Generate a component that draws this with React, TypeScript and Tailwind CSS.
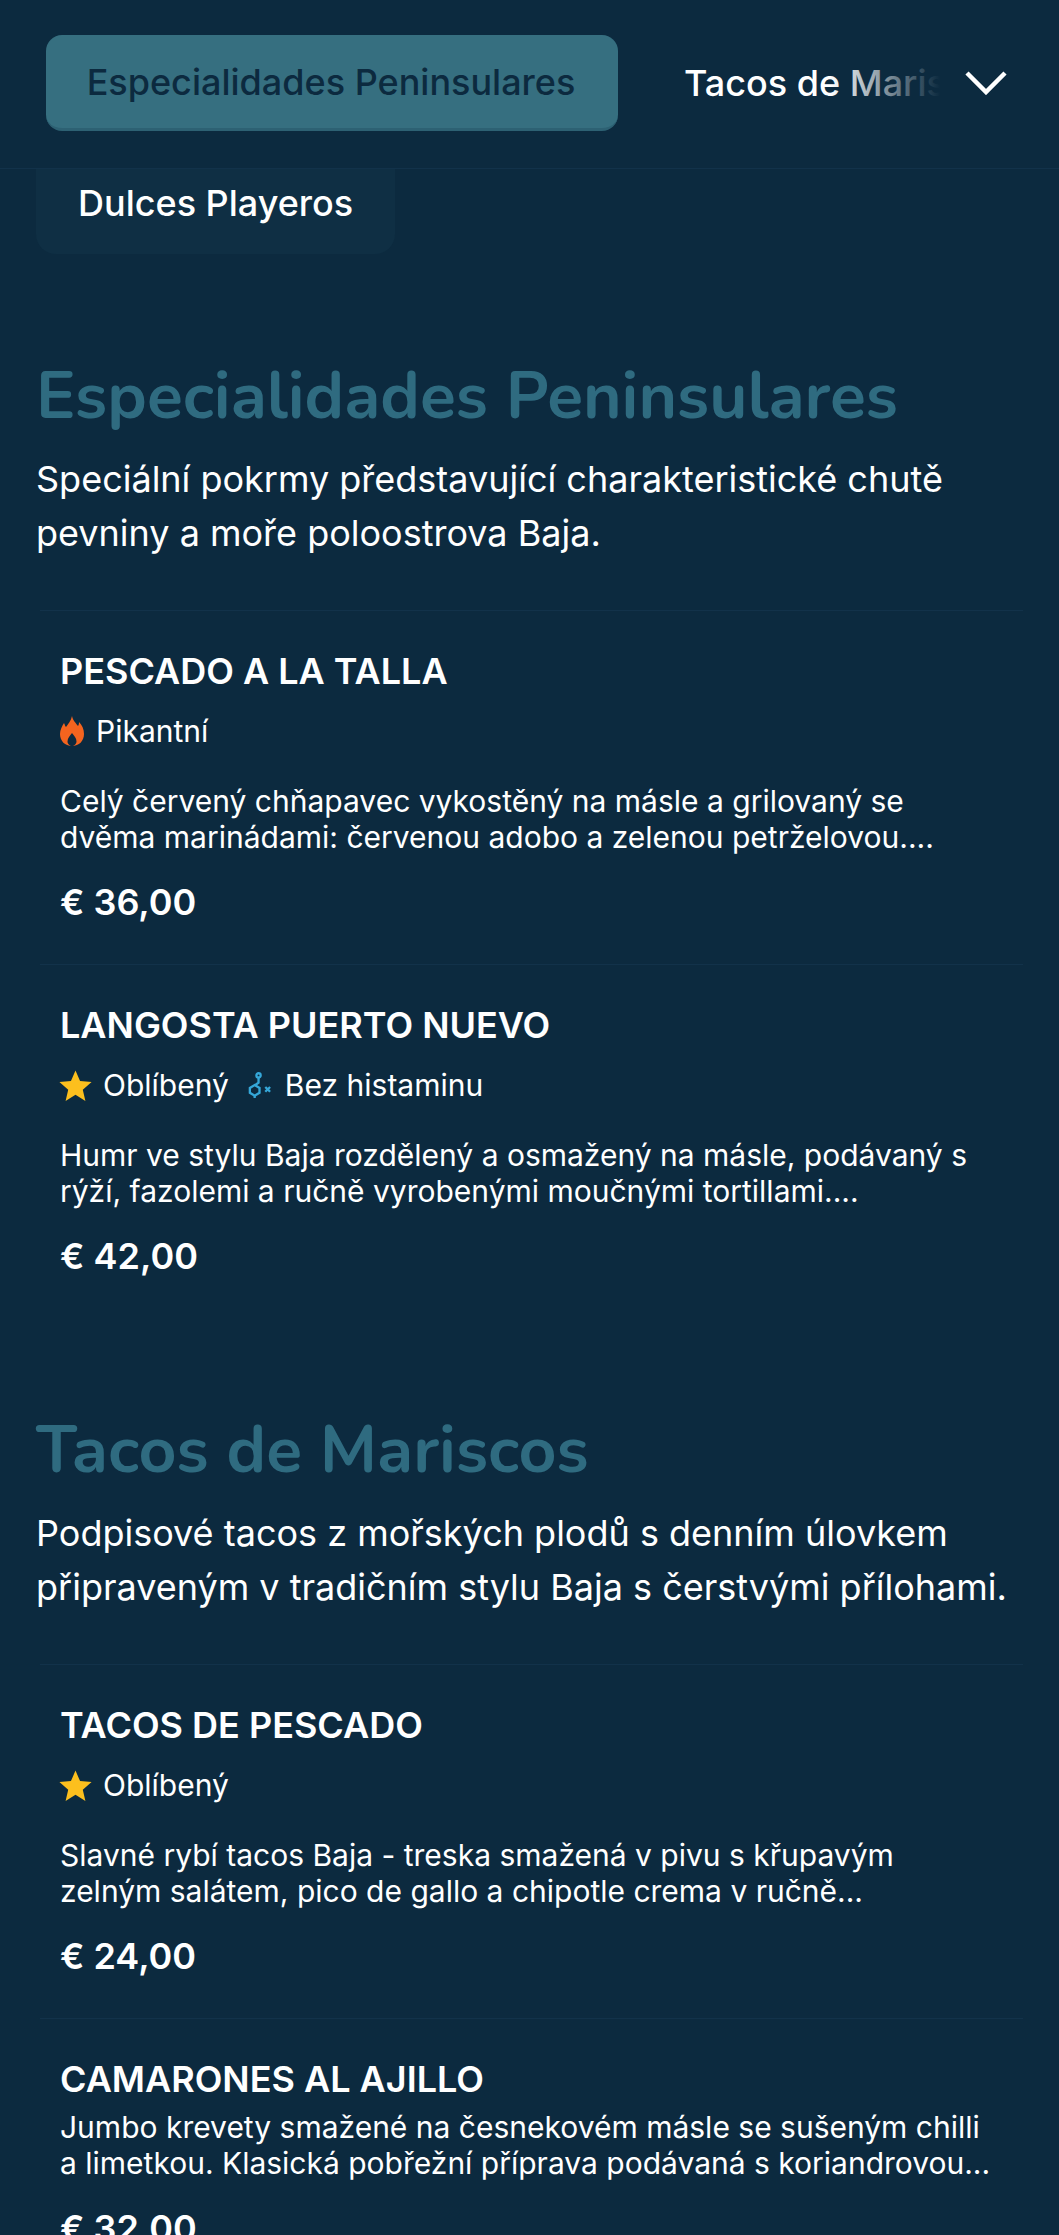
import type { ReactNode } from "react"

function Histamine() {
  return (
    <svg viewBox="0 0 28 28" className="h-[27px] w-[27px] text-[#35a7d8]" fill="none" stroke="currentColor" strokeWidth="2.4">
      <circle cx="13" cy="3.5" r="2.2" />
      <path d="M13 6v5l-4 3" />
      <path d="M9 13.5l5 3v5l-5 3-5-3v-5z" />
      <path d="M9 24.5v2.5" />
      <path d="M20 15.500l5 5M25 15.500l-5 5" strokeWidth="2.400" />
    </svg>
  )
}

function Flame() {
  return (
    <svg viewBox="0 0 24 30" className="h-[30px] w-[24px] text-[#f4641f]" fill="currentColor">
      <path
        fillRule="evenodd"
        d="M12 0C13 5 16 7 18 10C19 8.500 19 7 19 6C22 9 24 13 24 18C24 25 19 30 12 30C5 30 0 25 0 18C0 14 2 10 4 7C5 9 5 10 6 11C8 8 11 5 12 0ZM12 17C10 20 7.500 22 7.500 25.500C7.500 28 10 30 12 30C14 30 16.500 28 16.500 25.500C16.500 22 14 20 12 17Z"
      />
    </svg>
  )
}

function Star() {
  return (
    <svg viewBox="0 0 24 24" className="-mr-[1px] -ml-[1px] h-[33px] w-[33px] text-[#fcbf1e]" fill="currentColor">
      <path d="M12 1l3.300 7.800 8.400.7-6.400 5.500 1.900 8.200L12 18.800 4.800 23.200l1.900-8.200L.3 9.500l8.400-.7z" />
    </svg>
  )
}

function Tag({ icon, label }: { icon: ReactNode; label: string }) {
  return (
    <span className="flex items-center gap-[12px]">
      {icon}
      <span>{label}</span>
    </span>
  )
}

const sections = [
  {
    title: "Especialidades Peninsulares",
    text: "Speciální pokrmy představující charakteristické chutě pevniny a moře poloostrova Baja.",
    items: [
      {
        name: "PESCADO A LA TALLA",
        tags: [{ icon: <Flame />, label: "Pikantní" }],
        desc: "Celý červený chňapavec vykostěný na másle a grilovaný se dvěma marinádami: červenou adobo a zelenou petrželovou....",
        price: "€ 36,00",
      },
      {
        name: "LANGOSTA PUERTO NUEVO",
        tags: [
          { icon: <Star />, label: "Oblíbený" },
          { icon: <Histamine />, label: "Bez histaminu" },
        ],
        desc: "Humr ve stylu Baja rozdělený a osmažený na másle, podávaný s rýží, fazolemi a ručně vyrobenými moučnými tortillami....",
        price: "€ 42,00",
      },
    ],
  },
  {
    title: "Tacos de Mariscos",
    text: "Podpisové tacos z mořských plodů s denním úlovkem připraveným v tradičním stylu Baja s čerstvými přílohami.",
    items: [
      {
        name: "TACOS DE PESCADO",
        tags: [{ icon: <Star />, label: "Oblíbený" }],
        desc: "Slavné rybí tacos Baja - treska smažená v pivu s křupavým zelným salátem, pico de gallo a chipotle crema v ručně...",
        price: "€ 24,00",
      },
      {
        name: "CAMARONES AL AJILLO",
        tags: [],
        desc: "Jumbo krevety smažené na česnekovém másle se sušeným chilli a limetkou. Klasická pobřežní příprava podávaná s koriandrovou...",
        price: "€ 32,00",
      },
    ],
  },
]

export default function App() {
  return (
    <div className="h-[2235px] overflow-hidden bg-[#0c2a3f] font-['Inter',sans-serif] text-white">
      <header className="flex h-[169px] items-center border-b border-[#12324a] pb-[2px] pl-[46px]">
        <button className="flex h-[96px] w-[572px] shrink-0 items-center justify-center rounded-[16px] border-b-[3px] border-[#2d6173] bg-[#366f80] pr-[2px] text-[36px] font-medium text-[#0c2a3f]">
          Especialidades Peninsulares
        </button>
        <div className="relative ml-[66px] w-[256px] overflow-hidden whitespace-nowrap text-[36px] font-medium">
          Tacos de Mariscos
          <div className="absolute inset-y-0 right-0 w-[110px] bg-gradient-to-r from-transparent to-[#0c2a3f]" />
        </div>
        <svg viewBox="0 0 42 24" className="ml-[25px] h-[24px] w-[42px]" fill="none" stroke="white" strokeWidth="4.500">
          <path d="M2 2l19 19L40 2" />
        </svg>
      </header>

      <div className="ml-[36px] flex h-[85px] w-[359px] items-center rounded-b-[20px] bg-[#0f2f44] pb-[18px] pl-[42px] text-[36px] font-medium">
        Dulces Playeros
      </div>

      <main className="px-[36px] pt-[98px]">
        {sections.map((section) => (
          <section key={section.title} className="mb-[88px]">
            <h2 className="font-['Nunito','Lato',sans-serif] text-[66px] font-bold leading-[88px] text-[#2f6b80]">
              {section.title}
            </h2>
            <p className="mt-[12px] text-[36px] leading-[54px]">{section.text}</p>
            <div className="mt-[50px]">
              {section.items.map((item) => (
                <article key={item.name} className="ml-[4px] h-[354px] border-t border-[#12324a] pl-[20px] pr-[24px] pt-[35px]">
                  <h3 className="text-[36px] font-semibold leading-[50px]">{item.name}</h3>
                  {item.tags.length > 0 && (
                    <div className="mt-[10px] flex h-[50px] items-center gap-[17px] text-[30px]">
                      {item.tags.map((tag) => (
                        <Tag key={tag.label} icon={tag.icon} label={tag.label} />
                      ))}
                    </div>
                  )}
                  <p className={`${item.tags.length > 0 ? "mt-[27px]" : "mt-[5px]"} text-[30px] leading-[36px]`}>{item.desc}</p>
                  <p className="mt-[22px] text-[36px] font-semibold leading-[50px]">{item.price}</p>
                </article>
              ))}
            </div>
          </section>
        ))}
      </main>
    </div>
  )
}
